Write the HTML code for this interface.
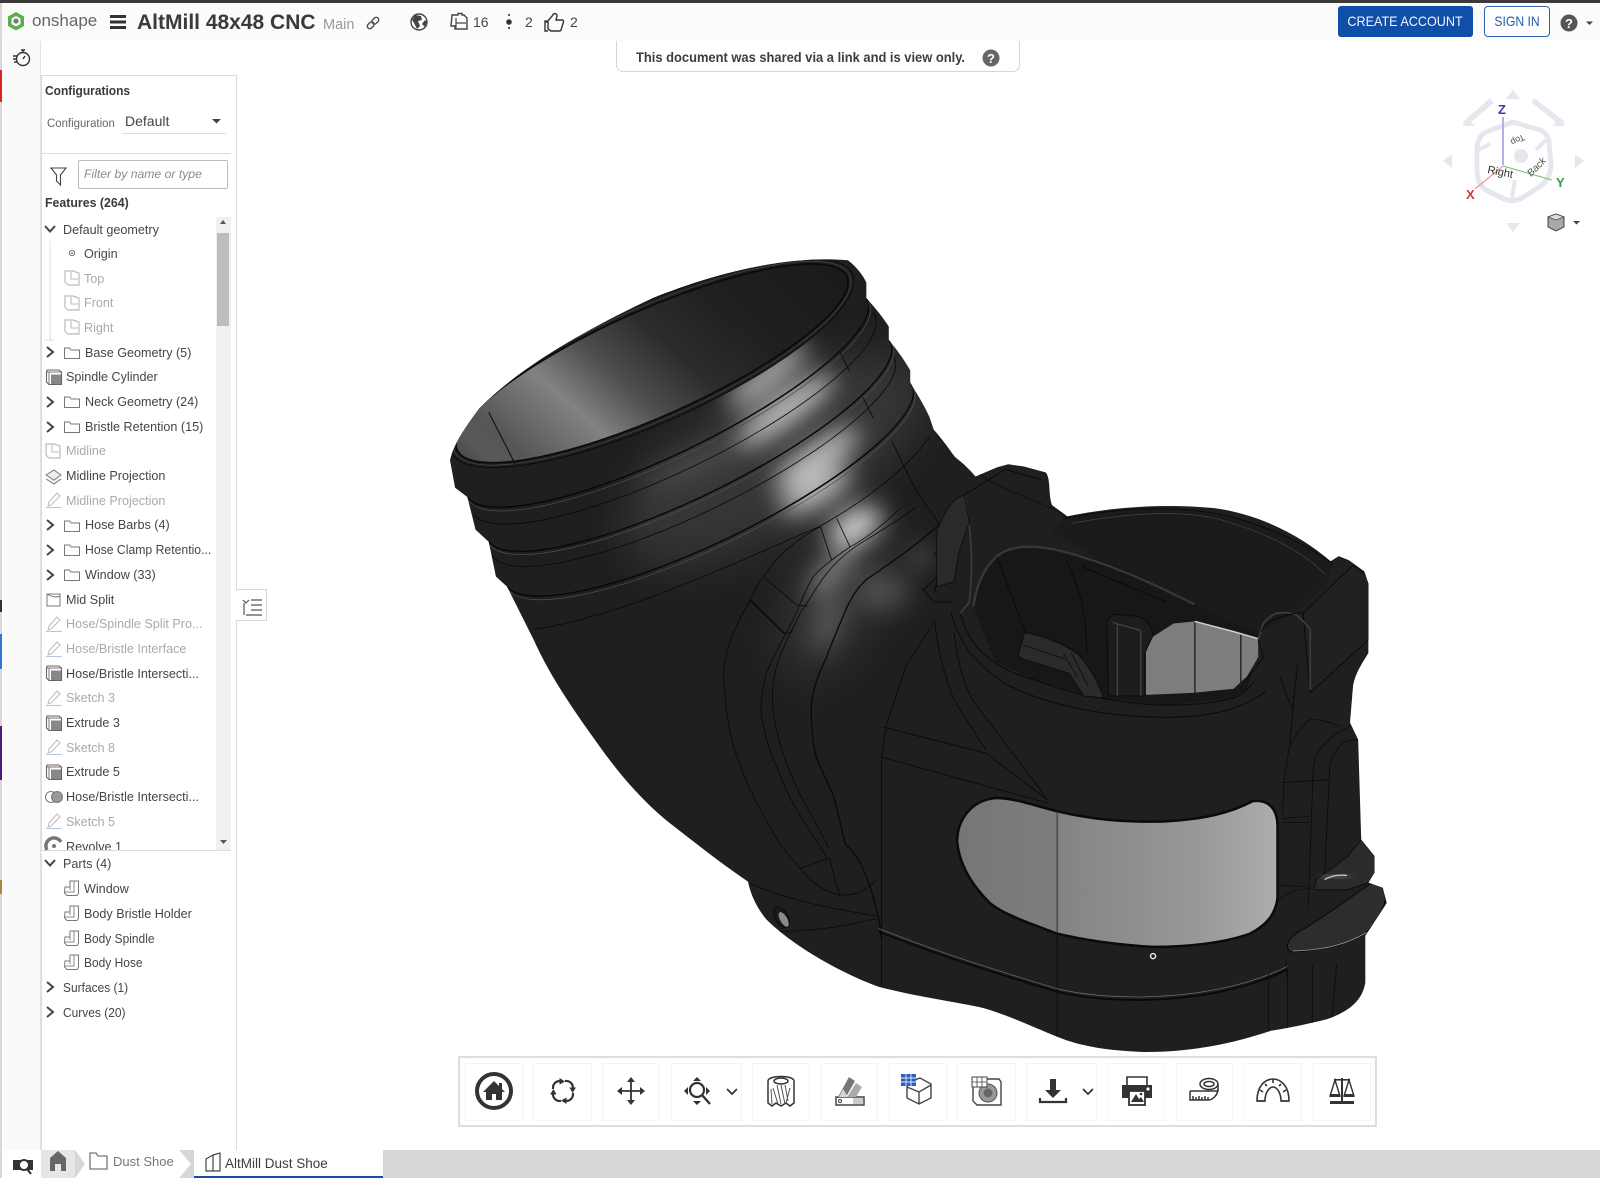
<!DOCTYPE html>
<html lang="en"><head><meta charset="utf-8"><title>AltMill 48x48 CNC | Onshape</title>
<style>
html,body{margin:0;padding:0;background:#fff}
body{position:relative;width:1600px;height:1178px;overflow:hidden;font-family:"Liberation Sans",sans-serif;color:#3f3f3f}
.a{position:absolute;white-space:nowrap}
svg{position:absolute;left:0;top:0;overflow:visible}
#rows{position:absolute;left:41px;top:217px;width:175px;height:633px;overflow:hidden}
.r{position:absolute;white-space:nowrap;font-size:12.6px;line-height:16px;color:#454545}
.d{color:#aaa}
.sq{display:inline-block}
</style></head><body>

<!-- chrome -->
<div class="a" style="left:0;top:0;width:1600px;height:3px;background:#3a3a3a"></div>
<div class="a" style="left:0;top:3px;width:1600px;height:38px;background:#fbfbfb"></div>
<div class="a" style="left:0;top:3px;width:2px;height:1175px;background:#d8d8d8"></div>
<div class="a" style="left:0;top:70px;width:2px;height:32px;background:#d22"></div>
<div class="a" style="left:0;top:634px;width:2px;height:35px;background:#2a78d8"></div>
<div class="a" style="left:0;top:726px;width:2px;height:54px;background:#4b1a80"></div>
<div class="a" style="left:0;top:600px;width:2px;height:12px;background:#333"></div>
<div class="a" style="left:0;top:880px;width:2px;height:14px;background:#a83"></div>
<div class="a" style="left:3px;top:41px;width:38px;height:1109px;background:#fafafa;border-right:1px solid #e2e2e2;box-sizing:border-box"></div>

<!-- 3D model -->
<svg width="1600" height="1178" viewBox="0 0 1568 1154.44" xmlns="http://www.w3.org/2000/svg">
<defs>
<clipPath id="sil"><path d="M831 255C840 262 846 270 849 277L849 292C858 302 866 312 871 320L871 333C880 344 887 354 892 363L892 375C900 388 906 398 911 409L915 421C924 431 930 440 936 448C945 455 951 461 956 467L977 458L988 455L1003 457L1025 463C1030 470 1027 484 1031 495L1046 506C1090 497 1140 493 1190 498C1235 504 1275 525 1304 550L1312 545L1322 549L1337 560L1341 572L1341 640C1335 650 1328 660 1326 672L1323 708L1331 725L1334 823L1347 839L1347 855L1341 865L1355 870L1359 885L1338 917L1338 963C1335 982 1320 992 1300 999C1275 1005 1260 1008 1246 1010C1210 1022 1170 1031 1123 1031C1090 1030 1060 1026 1036 1016C1000 1001 980 992 960 987C925 980 890 975 861 967C820 952 775 925 751 901C742 890 736 878 733 864C705 845 680 825 653 804C630 785 608 760 588 732C565 700 540 665 523 627L497 575L486 565L479 531L466 519L458 487L446 478L441 451C445 435 455 420 470 400C510 360 570 325 640 292C700 268 770 250 831 255Z"/></clipPath>
<filter id="b0" x="-80%" y="-80%" width="260%" height="260%"><feGaussianBlur stdDeviation="22"/></filter>
<filter id="b1" x="-80%" y="-80%" width="260%" height="260%"><feGaussianBlur stdDeviation="12"/></filter>
<filter id="b2" x="-60%" y="-60%" width="220%" height="220%"><feGaussianBlur stdDeviation="5"/></filter>
<linearGradient id="in" gradientUnits="userSpaceOnUse" x1="445" y1="440" x2="835" y2="265">
<stop offset="0" stop-color="#3a3a3a"/><stop offset=".08" stop-color="#585858"/><stop offset=".14" stop-color="#565656"/><stop offset=".3" stop-color="#828282"/><stop offset=".42" stop-color="#4e4e4e"/><stop offset=".55" stop-color="#2c2c2c"/><stop offset=".7" stop-color="#202020"/><stop offset="1" stop-color="#191919"/></linearGradient>
<linearGradient id="win" gradientUnits="userSpaceOnUse" x1="940" y1="0" x2="1255" y2="0">
<stop offset="0" stop-color="#767676"/><stop offset=".3" stop-color="#7d7d7d"/><stop offset=".32" stop-color="#848484"/><stop offset=".75" stop-color="#999"/><stop offset="1" stop-color="#aeaeae"/></linearGradient>
</defs>
<path d="M831 255C840 262 846 270 849 277L849 292C858 302 866 312 871 320L871 333C880 344 887 354 892 363L892 375C900 388 906 398 911 409L915 421C924 431 930 440 936 448C945 455 951 461 956 467L977 458L988 455L1003 457L1025 463C1030 470 1027 484 1031 495L1046 506C1090 497 1140 493 1190 498C1235 504 1275 525 1304 550L1312 545L1322 549L1337 560L1341 572L1341 640C1335 650 1328 660 1326 672L1323 708L1331 725L1334 823L1347 839L1347 855L1341 865L1355 870L1359 885L1338 917L1338 963C1335 982 1320 992 1300 999C1275 1005 1260 1008 1246 1010C1210 1022 1170 1031 1123 1031C1090 1030 1060 1026 1036 1016C1000 1001 980 992 960 987C925 980 890 975 861 967C820 952 775 925 751 901C742 890 736 878 733 864C705 845 680 825 653 804C630 785 608 760 588 732C565 700 540 665 523 627L497 575L486 565L479 531L466 519L458 487L446 478L441 451C445 435 455 420 470 400C510 360 570 325 640 292C700 268 770 250 831 255Z" fill="#1f1f1f"/>
<g clip-path="url(#sil)">
 <!-- soft highlights -->
 <ellipse cx="760" cy="450" rx="170" ry="70" transform="rotate(-30 760 450)" fill="#666" opacity=".32" filter="url(#b0)"/>
 <ellipse cx="820" cy="580" rx="40" ry="90" transform="rotate(25 820 580)" fill="#666" opacity=".3" filter="url(#b0)"/>
 <g filter="url(#b1)" fill="#dcdcdc">
  <ellipse cx="752" cy="368" rx="50" ry="12" transform="rotate(-38 752 368)" opacity=".8"/>
  <ellipse cx="770" cy="402" rx="58" ry="13" transform="rotate(-36 770 402)" opacity=".9"/>
  <ellipse cx="800" cy="450" rx="50" ry="14" transform="rotate(-35 800 450)" opacity=".85"/>
  <ellipse cx="800" cy="482" rx="40" ry="13" transform="rotate(-30 800 482)" opacity=".8"/>
  <ellipse cx="838" cy="516" rx="28" ry="15" transform="rotate(-30 838 516)" opacity="1"/>
  <ellipse cx="815" cy="560" rx="32" ry="9" transform="rotate(-50 815 560)" opacity=".55"/>
  <ellipse cx="812" cy="610" rx="9" ry="28" transform="rotate(20 812 610)" opacity=".3"/>
  <ellipse cx="866" cy="580" rx="26" ry="18" opacity=".22"/>
  <ellipse cx="902" cy="546" rx="11" ry="7" opacity=".4"/>
  <ellipse cx="680" cy="455" rx="60" ry="10" transform="rotate(-25 680 455)" opacity=".15"/>
 </g>
 <!-- mouth -->
 <g transform="rotate(-24 639 356)">
  <ellipse cx="639" cy="356" rx="215" ry="58" fill="#1e1e1e" stroke="#0c0c0c" stroke-width="1"/>
  <ellipse cx="639" cy="356" rx="212" ry="55" fill="none" stroke="#555" stroke-width=".5"/>
 </g>
 <ellipse cx="639" cy="356" rx="209" ry="52" transform="rotate(-24 639 356)" fill="url(#in)" stroke="#0a0a0a" stroke-width="1.6"/>
 <path d="M479 404L505 455" stroke="#0c0c0c" stroke-width="1" fill="none"/>
 <!-- ribs -->
 <g fill="none" stroke="#090909">
  <path d="M458 487A216 54 -26 0 0 849 292" stroke-width="1.5"/>
  <path d="M459 490A216 54 -26 0 0 851 296" stroke="#505050" stroke-width=".7"/>
  <path d="M465 505A216 54 -26 0 0 855 306" stroke-width=".8"/>
  <path d="M479 531A216 54 -26 0 0 871 333" stroke-width="1.5"/>
  <path d="M480 534A216 54 -26 0 0 873 336" stroke="#505050" stroke-width=".7"/>
  <path d="M482 544A216 54 -26 0 0 876 350" stroke-width=".8"/>
  <path d="M497 575A216 54 -26 0 0 892 375" stroke-width="1.5"/>
  <path d="M498 578A216 54 -26 0 0 894 379" stroke="#505050" stroke-width=".7"/>
  <path d="M523 617C600 605 680 570 803 516C840 495 885 465 911 428" stroke-width=".8"/>
  <path d="M823 345L833 365M846 390L856 410" stroke-width=".8"/>
  <path d="M874 432C885 455 895 480 915 505C925 520 925 530 915 545" stroke-width=".8"/>
  <!-- channel lines -->
  <path d="M804 516C785 526 770 538 758 552C748 565 740 576 735 588C725 605 718 620 714 634C709 650 708 662 710 673C711 695 714 715 719 732C728 760 738 782 751 804C762 825 772 838 784 851" stroke-width=".8"/>
  <path d="M882 498C865 515 850 527 833 536C820 545 808 553 797 565C789 578 783 595 777 608C766 628 757 645 751 660C747 675 745 687 746 699C749 720 755 740 764 758C775 790 795 815 810 840" stroke-width=".8"/>
  <path d="M898 497C880 510 865 519 849 529C833 538 820 550 810 562C800 575 792 590 784 601C775 620 766 636 761 653C757 668 756 685 758 699C760 715 765 732 771 748C782 780 800 805 812 831" stroke-width=".8"/>
  <path d="M930 505C905 530 875 550 849 568C840 576 835 585 830 595C824 610 816 627 810 644C802 660 796 677 795 693C795 710 796 727 800 742C806 758 813 770 817 781C822 798 825 813 828 827C835 833 840 840 843 846C850 860 856 878 859 892C862 902 863 912 864 921" stroke-width="1.3"/>
  <path d="M804 516L815 549M820 508L833 536M750 567L781 593M781 593L792 594" stroke-width=".8"/>
  <path d="M735 588L769 621" stroke-width="1.6"/>
  <path d="M769 621L777 619M784 851L813 841L823 879M784 851C795 865 810 875 823 877C840 878 850 872 859 862M735 866C780 885 825 892 861 898M764 913C800 912 830 908 859 900" stroke-width=".8"/>
  <path d="M916 608L888 653L869 709L864 742L864 967" stroke-width=".8"/>
  <path d="M863 712L966 738L1027 784M864 742L1027 787" stroke-width=".8"/>
  <path d="M916 608C918 635 925 660 935 686L966 735M935 620C938 650 945 670 953 686L1027 784" stroke-width=".8"/>
  <path d="M1036 795V1018" stroke-width=".8"/>
  <path d="M861 913C930 940 980 955 1036 972C1090 985 1190 985 1262 950" stroke-width="1.8"/>
  <path d="M861 910C930 937 980 952 1036 969C1090 982 1190 982 1262 947" stroke="#707070" stroke-width=".7"/>
  <path d="M1243 955L1243 1010M1262 950L1262 1008M1286 945L1286 1003M1310 945L1305 998" stroke-width=".7"/>
  <!-- right-side arches -->
  <path d="M1257 797C1258 775 1258 760 1261 748C1262 740 1263 735 1264 731C1270 718 1278 710 1284 705M1282 888C1284 840 1286 790 1287 751C1288 745 1290 740 1293 735C1300 725 1312 716 1323 712M1298 859C1300 820 1302 780 1303 751C1305 742 1310 733 1316 728C1322 725 1328 724 1331 726" stroke-width=".7"/>
  <path d="M1257 767L1303 764M1256 806H1284M1256 802L1284 800M1250 867L1280 869M1284 705C1292 705 1300 706 1313 712" stroke-width=".7"/>
 </g>
 <!-- opening -->
 <path d="M1042 508C1100 497 1160 494 1208 507C1250 518 1285 537 1306 552L1300 572C1270 600 1250 615 1236 619L1209 611L1143 578L1078 549L1030 520Z" fill="#1b1b1b"/>
 <path d="M1042 508C1100 497 1160 494 1208 507C1250 518 1285 537 1306 552" fill="none" stroke="#0b0b0b" stroke-width="1"/>
 <path d="M1050 513C1120 500 1170 500 1205 512C1245 524 1275 540 1298 562" fill="none" stroke="#444" stroke-width=".7"/>
 <path d="M954 594C960 570 968 555 977 546C990 537 1000 536 1013 537C1040 540 1060 543 1078 549C1110 560 1125 568 1143 578C1170 592 1190 602 1209 611L1236 619L1222 675L1209 684L1143 691L1078 684L1013 666L975 648Z" fill="#171717"/>
 <path d="M941 601C945 615 950 625 957 634C975 652 990 660 1013 666C1040 676 1060 681 1078 684C1100 688 1125 691 1143 691C1170 691 1190 689 1209 684C1218 681 1222 675 1230 668" fill="none" stroke="#0a0a0a" stroke-width="1"/>
 <path d="M932 600C940 630 955 650 985 670C1020 688 1070 702 1143 703C1180 703 1215 697 1240 678" fill="none" stroke="#0a0a0a" stroke-width="1"/>
 <path d="M954 594C958 565 970 548 985 540C1000 534 1020 535 1040 540C1090 553 1130 572 1170 592" fill="none" stroke="#383838" stroke-width="2.2"/>
 <!-- grey insert -->
 <path d="M1123 637L1130 624L1150 611L1171 609L1209 619L1233 626L1233 644L1222 663L1209 675L1169 679L1123 681Z" fill="#7d7d7d"/>
 <path d="M1171 609L1209 619L1233 626" fill="none" stroke="#cfcfcf" stroke-width="1.5"/>
 <path d="M1171 610V680M1216 622V672" stroke="#1d1d1d" stroke-width="1.3" fill="none"/>
 <!-- inner stems -->
 <path d="M1085 610C1085 606 1090 602 1095 602L1115 604C1125 607 1128 614 1130 622L1122 640L1122 682L1086 682Z" fill="#1d1d1d" stroke="#0a0a0a" stroke-width="1"/>
 <path d="M1090 610L1118 618M1118 618V682M1095 612V682" fill="none" stroke="#454545" stroke-width="1.2"/>
 <path d="M998 642L1004 620C1020 622 1040 630 1055 640C1068 652 1075 668 1082 684L1062 682L1048 660L1000 645Z" fill="#2b2b2b" stroke="#0c0c0c" stroke-width=".9"/>
 <path d="M1003 632L1044 646M1042 640L1056 664M1050 640L1066 672" fill="none" stroke="#0c0c0c" stroke-width=".8"/>
 <path d="M977 546L1005 620M1045 550C1055 570 1065 595 1065 640M1060 555L1143 590" fill="none" stroke="#070707" stroke-width=".8"/>
 <!-- right clip -->
 <path d="M1277 601L1326 554L1341 565L1341 627L1284 679Z" fill="#212121" stroke="#0b0b0b" stroke-width="1"/>
 <path d="M1233 627L1238 611C1242 606 1246 603 1251 601C1258 600 1265 600 1271 603C1276 608 1281 612 1284 617L1284 676" fill="none" stroke="#3e3e3e" stroke-width="1.6"/>
 <path d="M1233 627L1238 644L1222 666M1254 663L1267 696L1264 728M1272 650C1270 665 1268 680 1267 696" fill="none" stroke="#0a0a0a" stroke-width=".9"/>
 <path d="M1236 619C1240 610 1248 607 1258 604C1265 602 1272 600 1277 601" fill="none" stroke="#0a0a0a" stroke-width="1"/>
 <!-- left clip -->
 <path d="M916 580C920 560 925 540 925 520C928 500 935 490 945 485L985 460L1020 470M924 560L905 578L915 590L934 590" fill="none" stroke="#0a0a0a" stroke-width="1"/>
 <path d="M945 485C950 510 955 545 950 590L941 601" fill="none" stroke="#3c3c3c" stroke-width="1.6"/>
 <path d="M918 520C925 505 930 490 945 485L950 512L940 540L935 570L918 575Z" fill="#2a2a2a" stroke="#0a0a0a" stroke-width=".8"/>
 <path d="M960 465C980 480 1030 495 1045 506" fill="none" stroke="#0c0c0c" stroke-width=".8"/>
 <path d="M1290 862L1320 840L1334 823L1347 839L1347 855L1341 865L1320 872L1288 872Z" fill="#2b2b2b" stroke="#0a0a0a" stroke-width=".8"/>
 <path d="M1296 860L1322 858" stroke="#a8a8a8" stroke-width="2.5" fill="none" filter="url(#b2)"/>
 <path d="M1298 862C1305 858 1312 857 1320 858" stroke="#c8c8c8" stroke-width="1.2" fill="none"/>
 <!-- pad -->
 <path d="M1263 932C1259 925 1264 917 1280 909C1295 900 1320 882 1343 866C1350 864 1355 868 1357 875C1360 885 1352 900 1339 914C1320 925 1300 931 1267 933Z" fill="#2d2d2d" stroke="#090909" stroke-width="1"/>
 <path d="M1267 932C1300 931 1320 925 1339 914" fill="none" stroke="#999" stroke-width=".8"/>
 <path d="M1251 885C1258 875 1270 872 1285 870M1260 940L1262 965" fill="none" stroke="#0d0d0d" stroke-width=".7"/>
 <!-- hole -->
 <ellipse cx="766" cy="899" rx="6" ry="11" transform="rotate(-30 766 899)" fill="#1a1a1a" stroke="#0a0a0a" stroke-width="1"/>
 <ellipse cx="768" cy="901" rx="3.5" ry="8" transform="rotate(-30 768 901)" fill="#8a8a8a"/>
</g>
<!-- window -->
<path d="M938 825C938 805 950 785 975 782C995 782 1015 790 1036 795C1070 803 1100 806 1140 805C1180 803 1205 797 1228 785C1245 783 1252 795 1252 810L1252 880C1250 897 1240 907 1225 915C1200 924 1165 928 1130 928C1095 926 1065 922 1036 915C1010 905 985 897 970 885C950 865 940 845 938 825Z" fill="url(#win)" stroke="#0b0b0b" stroke-width="2.5"/>
<path d="M1036 795V915" stroke="#2a2a2a" stroke-width=".9" fill="none"/>
<circle cx="1130" cy="937" r="2.5" fill="#222" stroke="#eee" stroke-width="1.4"/>
</svg>

<!-- sidebar panel -->
<div class="a" style="left:41px;top:75px;width:196px;height:1075px;box-sizing:border-box;border:1px solid #dcdcdc;border-bottom:none;background:#fff"></div>
<div class="a" style="left:41px;top:153px;width:190px;height:1px;background:#dcdcdc"></div>
<div class="a" style="left:41px;top:850px;width:190px;height:1px;background:#dcdcdc"></div>
<div class="a" style="left:122px;top:133px;width:104px;height:1px;background:#ddd"></div>
<div class="a" style="left:78px;top:160px;width:148px;height:27px;border:1px solid #bbb;border-radius:2px;background:#fff"></div>
<div class="a" style="left:84px;top:167px;font-size:12.2px;line-height:15px;font-style:italic;color:#8a8a8a">Filter by name or type</div>
<div class="a" style="left:216px;top:217px;width:15px;height:633px;background:#f0f0f0"></div>
<div class="a" style="left:217px;top:233px;width:12px;height:93px;background:#bdbdbd"></div>
<div class="a" style="left:45px;top:82.5px;font-size:13px;font-weight:bold;line-height:16px;color:#3a3a3a;transform:scaleX(.92);transform-origin:0 0">Configurations</div>
<div class="a" style="left:47px;top:116px;font-size:12.4px;line-height:15px;color:#666;transform:scaleX(.92);transform-origin:0 0">Configuration</div>
<div class="a" style="left:125px;top:113px;font-size:14px;line-height:17px;color:#444">Default</div>
<div class="a" style="left:45px;top:195px;font-size:13px;font-weight:bold;line-height:16px;color:#3a3a3a;transform:scaleX(.95);transform-origin:0 0">Features (264)</div>

<div id="rows">
<div class="r" style="left:22px;top:5px">Default geometry</div>
<div class="r" style="left:43px;top:29px">Origin</div>
<div class="r d" style="left:43px;top:54px">Top</div>
<div class="r d" style="left:43px;top:78px">Front</div>
<div class="r d" style="left:43px;top:103px">Right</div>
<div class="r" style="left:44px;top:128px">Base Geometry (5)</div>
<div class="r" style="left:25px;top:152px">Spindle Cylinder</div>
<div class="r" style="left:44px;top:177px">Neck Geometry (24)</div>
<div class="r" style="left:44px;top:202px">Bristle Retention (15)</div>
<div class="r d" style="left:25px;top:226px">Midline</div>
<div class="r" style="left:25px;top:251px">Midline Projection</div>
<div class="r d" style="left:25px;top:276px">Midline Projection</div>
<div class="r" style="left:44px;top:300px">Hose Barbs (4)</div>
<div class="r" style="left:44px;top:325px;transform:scaleX(.97);transform-origin:0 0">Hose Clamp Retentio...</div>
<div class="r" style="left:44px;top:350px">Window (33)</div>
<div class="r" style="left:25px;top:375px">Mid Split</div>
<div class="r d" style="left:25px;top:399px">Hose/Spindle Split Pro...</div>
<div class="r d" style="left:25px;top:424px">Hose/Bristle Interface</div>
<div class="r" style="left:25px;top:449px">Hose/Bristle Intersecti...</div>
<div class="r d" style="left:25px;top:473px">Sketch 3</div>
<div class="r" style="left:25px;top:498px">Extrude 3</div>
<div class="r d" style="left:25px;top:523px">Sketch 8</div>
<div class="r" style="left:25px;top:547px">Extrude 5</div>
<div class="r" style="left:25px;top:572px">Hose/Bristle Intersecti...</div>
<div class="r d" style="left:25px;top:597px">Sketch 5</div>
<div class="r" style="left:25px;top:622px">Revolve 1</div>
</div>
<div class="r" style="left:63px;top:855.7px">Parts (4)</div>
<div class="r" style="left:84px;top:880.5px">Window</div>
<div class="r" style="left:84px;top:905.5px">Body Bristle Holder</div>
<div class="r" style="left:84px;top:930.5px;transform:scaleX(.95);transform-origin:0 0">Body Spindle</div>
<div class="r" style="left:84px;top:955px;transform:scaleX(.95);transform-origin:0 0">Body Hose</div>
<div class="r" style="left:63px;top:980px;transform:scaleX(.95);transform-origin:0 0">Surfaces (1)</div>
<div class="r" style="left:63px;top:1004.7px;transform:scaleX(.95);transform-origin:0 0">Curves (20)</div>

<!-- list toggle -->
<div class="a" style="left:236px;top:589px;width:31px;height:32px;box-sizing:border-box;border:1px solid #d8d8d8;border-left:none;background:#fff"></div>

<!-- top bar text -->
<div class="a" style="left:32px;top:11px;font-size:17px;line-height:20px;color:#666">onshape</div>
<div class="a" style="left:137px;top:10px;font-size:21px;font-weight:bold;line-height:25px;color:#3a3a3a">AltMill 48x48 CNC</div>
<div class="a" style="left:323px;top:16px;font-size:14.5px;line-height:18px;color:#999">Main</div>
<div class="a" style="left:473px;top:14px;font-size:14px;line-height:17px;color:#444">16</div>
<div class="a" style="left:525px;top:14px;font-size:14px;line-height:17px;color:#444">2</div>
<div class="a" style="left:570px;top:14px;font-size:14px;line-height:17px;color:#444">2</div>

<!-- banner -->
<div class="a" style="left:616px;top:41px;width:404px;height:31px;box-sizing:border-box;border:1px solid #d5d5d5;border-top:none;border-radius:0 0 7px 7px;background:#fff"></div>
<div class="a" style="left:636px;top:49px;font-size:14px;font-weight:bold;line-height:17px;color:#3d3d3d;transform:scaleX(.922);transform-origin:0 0">This document was shared via a link and is view only.</div>

<!-- buttons -->
<div class="a" style="left:1338px;top:6px;width:135px;height:31px;background:#0f4fa8;border-radius:3px;color:#f1f5fb;font-size:14px;line-height:31px;text-align:center"><span class="sq" style="transform:scaleX(.9)">CREATE ACCOUNT</span></div>
<div class="a" style="left:1484px;top:6px;width:66px;height:31px;box-sizing:border-box;background:#fff;border:1px solid #2e64ac;border-radius:4px;color:#255ca6;font-size:14px;line-height:29px;text-align:center"><span class="sq" style="transform:scaleX(.87)">SIGN IN</span></div>

<!-- bottom -->
<div class="a" style="left:41px;top:1150px;width:1559px;height:28px;background:#d7d7d7"></div>
<div class="a" style="left:41px;top:1150px;width:34px;height:28px;background:#e6e6e6"></div>
<div class="a" style="left:75px;top:1150px;width:116px;height:28px;background:#fff;clip-path:polygon(0 0,104px 0,116px 14px,104px 28px,0 28px,10px 14px)"></div>
<div class="a" style="left:194px;top:1150px;width:189px;height:26px;background:#fff;border-bottom:2px solid #1b4f9e"></div>
<div class="a" style="left:113px;top:1153px;font-size:13px;line-height:17px;color:#777">Dust Shoe</div>
<div class="a" style="left:225px;top:1155px;font-size:13.5px;line-height:17px;color:#3d3d3d">AltMill Dust Shoe</div>

<!-- toolbar -->
<div class="a" style="left:458px;top:1056px;width:919px;height:71px;box-sizing:border-box;border:2px solid #dedede;background:#fff"></div>
<div class="a" style="left:465px;top:1063px;width:58px;height:58px;box-sizing:border-box;border:1px solid #f5f5f5"></div>
<div class="a" style="left:533px;top:1063px;width:59px;height:58px;box-sizing:border-box;border:1px solid #f5f5f5"></div>
<div class="a" style="left:602px;top:1063px;width:57px;height:58px;box-sizing:border-box;border:1px solid #f5f5f5"></div>
<div class="a" style="left:671px;top:1063px;width:71px;height:58px;box-sizing:border-box;border:1px solid #f5f5f5"></div>
<div class="a" style="left:752px;top:1063px;width:58px;height:58px;box-sizing:border-box;border:1px solid #f5f5f5"></div>
<div class="a" style="left:821px;top:1063px;width:57px;height:58px;box-sizing:border-box;border:1px solid #f5f5f5"></div>
<div class="a" style="left:889px;top:1063px;width:58px;height:58px;box-sizing:border-box;border:1px solid #f5f5f5"></div>
<div class="a" style="left:957px;top:1063px;width:59px;height:58px;box-sizing:border-box;border:1px solid #f5f5f5"></div>
<div class="a" style="left:1026px;top:1063px;width:71px;height:58px;box-sizing:border-box;border:1px solid #f5f5f5"></div>
<div class="a" style="left:1107px;top:1063px;width:58px;height:58px;box-sizing:border-box;border:1px solid #f5f5f5"></div>
<div class="a" style="left:1176px;top:1063px;width:57px;height:58px;box-sizing:border-box;border:1px solid #f5f5f5"></div>
<div class="a" style="left:1244px;top:1063px;width:58px;height:58px;box-sizing:border-box;border:1px solid #f5f5f5"></div>
<div class="a" style="left:1313px;top:1063px;width:58px;height:58px;box-sizing:border-box;border:1px solid #f5f5f5"></div>

<!-- icons -->
<svg width="1600" height="1178" viewBox="0 0 1600 1178" xmlns="http://www.w3.org/2000/svg">
<defs>
<g id="cr"><path d="M-3 -5L3 0L-3 5" fill="none" stroke="#444" stroke-width="2"/></g>
<g id="cd"><path d="M-5 -3L0 2.5L5 -3" fill="none" stroke="#444" stroke-width="2"/></g>
<g id="fo"><path d="M-7.5 -5H-2.5L-1 -3H7.5V5.5H-7.5Z" fill="#fff" stroke="#777" stroke-width="1"/></g>
<g id="ex"><path d="M-7 -7H5L7.5 -5V7.5H-5L-7.5 5V-5Z" fill="#fff" stroke="#666" stroke-width="1.1"/><path d="M-7 -5H7M-5 -5V7" stroke="#777" stroke-width="1" fill="none"/><rect x="-3" y="-2.5" width="10" height="9.5" fill="#888"/></g>
<g id="pl"><path d="M-7 -7L1 -7L7 -5V7L-4 7L-7 4Z" fill="#fff" stroke="#bbb" stroke-width="1.2"/><path d="M-1 -6V1H6" fill="none" stroke="#bbb" stroke-width="1.1"/></g>
<g id="sk"><path d="M-6 6L-5 2L3 -7L6 -4L-3 5Z" fill="#fff" stroke="#bbb" stroke-width="1"/><path d="M-8 7.5H8" stroke="#b6c6dc" stroke-width="1"/></g>
<g id="pa"><path d="M-7 -1H-2V-7H6.5V5.5L5 7.5H-5L-7.5 5Z" fill="#fff" stroke="#777" stroke-width="1"/><path d="M-7 4H2V-7M-2 -1V2" fill="none" stroke="#888" stroke-width="1"/></g>
<g id="ol"><path d="M-10 -2C-10.5 -7 -7 -10 -3 -10" fill="none" stroke="#333" stroke-width="2.2"/><path d="M-3.5 -13L2 -9.5L-3.5 -6.5Z" fill="#333"/></g>
</defs>

<!-- sidebar tree icons -->
<use href="#cd" x="50" y="229"/><use href="#cr" x="50" y="352"/><use href="#cr" x="50" y="402"/><use href="#cr" x="50" y="427"/><use href="#cr" x="50" y="525"/><use href="#cr" x="50" y="550"/><use href="#cr" x="50" y="575"/><use href="#cd" x="50" y="863"/><use href="#cr" x="50" y="987"/><use href="#cr" x="50" y="1012"/>
<path d="M50 241V340M45 340H54" stroke="#ddd" stroke-width="1" fill="none"/>
<circle cx="72" cy="253" r="2.6" fill="none" stroke="#777"/><circle cx="72" cy="253" r="1" fill="#777"/>
<use href="#pl" x="72" y="278"/><use href="#pl" x="72" y="303"/><use href="#pl" x="72" y="327"/><use href="#pl" x="53" y="451"/>
<use href="#fo" x="72" y="353"/><use href="#fo" x="72" y="402"/><use href="#fo" x="72" y="427"/><use href="#fo" x="72" y="526"/><use href="#fo" x="72" y="550"/><use href="#fo" x="72" y="575"/>
<use href="#ex" x="54" y="377"/><use href="#ex" x="54" y="673"/><use href="#ex" x="54" y="723"/><use href="#ex" x="54" y="772"/>
<use href="#sk" x="54" y="500"/><use href="#sk" x="54" y="624"/><use href="#sk" x="54" y="649"/><use href="#sk" x="54" y="698"/><use href="#sk" x="54" y="747"/><use href="#sk" x="54" y="821"/>
<path d="M46 475L54 470L61 475L54 480ZM46 479L54 484L61 479" fill="#eee" stroke="#777" stroke-width="1"/>
<path d="M47 594H60V606H47Z M47 594C52 597 56 598 60 596" fill="#fff" stroke="#777" stroke-width="1"/>
<circle cx="51" cy="797" r="5.5" fill="#fff" stroke="#777"/><circle cx="57" cy="797" r="5.5" fill="#999" stroke="#777"/>
<path d="M47 850A8 8 0 1 1 61 842" fill="none" stroke="#777" stroke-width="3.5"/><circle cx="54" cy="846" r="2" fill="#777"/>
<rect x="41" y="851" width="180" height="3" fill="#fff"/>
<use href="#pa" x="72" y="888"/><use href="#pa" x="72" y="913"/><use href="#pa" x="72" y="938"/><use href="#pa" x="72" y="962"/>
<path d="M220 224L223 220L226 224Z M220 840H227L223.5 844Z" fill="#555"/>
<path d="M51 168H66L60.5 175V185L56.5 181V175Z" fill="#fff" stroke="#444" stroke-width="1.1"/>
<path d="M212 119H221L216.5 123.5Z" fill="#444"/>
<path d="M243 600L246 603L249 600M244 603V615M251 600H262M251 605H262M251 610H262M246 615H262" fill="none" stroke="#555" stroke-width="1.2"/>

<!-- top bar icons -->
<path d="M16 12L24 16.5V26L16 30.5L8 26V16.5Z" fill="#5fae4e"/><path d="M16 16L20.5 18.5V24L16 26.5L11.5 24V18.5Z" fill="#fbfbfb"/><circle cx="16" cy="21" r="2.6" fill="#7a7a7a"/>
<rect x="110" y="15" width="16" height="3" fill="#333"/><rect x="110" y="20.5" width="16" height="3" fill="#333"/><rect x="110" y="26" width="16" height="3" fill="#333"/>
<g transform="translate(373 23) rotate(-45)" fill="none" stroke="#555" stroke-width="1.5"><rect x="-7" y="-2.5" width="7.5" height="5" rx="2.5"/><rect x="-.5" y="-2.5" width="7.5" height="5" rx="2.5"/></g>
<circle cx="419" cy="22" r="8" fill="#fff" stroke="#444" stroke-width="1.4"/><path d="M415 15L421 16L422 20L418 21L420 26L417 29L414 23L412 20ZM425 20L427 22L425 27L422 24Z" fill="#444"/>
<path d="M451 16H457V14.5H461V16H463L466 19V30H454V27H450Z" fill="none" stroke="#444" stroke-width="1.4" transform="translate(1 -1)"/><path d="M455 19V29M455 24H465" stroke="#444" stroke-width="1.2" transform="translate(1 -1)" fill="none"/>
<circle cx="509" cy="22" r="2.8" fill="#333"/><path d="M509 14V17M509 27V31" stroke="#333" stroke-width="1.6" stroke-dasharray="2 2" fill="none"/>
<path d="M547 22L553 15C553 13 557 13 557 16L556 20H562C563 20 564 21 563.5 22L561 30C561 31 560 31 559 31H551L548 29V22ZM547 21H545V31H548" fill="none" stroke="#333" stroke-width="1.4"/>
<circle cx="991" cy="58" r="8.5" fill="#666"/><text x="991" y="63" font-family="Liberation Sans" font-size="13" font-weight="bold" fill="#fff" text-anchor="middle">?</text>
<circle cx="1569" cy="23" r="8.5" fill="#555"/><text x="1569" y="28" font-family="Liberation Sans" font-size="13" font-weight="bold" fill="#fff" text-anchor="middle">?</text>
<path d="M1586 21.5H1593L1589.5 25Z" fill="#444"/>

<!-- stopwatch -->
<g fill="none" stroke="#333" stroke-width="1.4"><circle cx="23" cy="59" r="6.5"/><path d="M21 50H25M23 50V52M23 59L25 56M13 56H17M13 59H16M14 62H17"/></g>

<!-- bottom bar icons -->
<path d="M50 1158L58 1151L66 1158V1171H61V1164H55V1171H50Z" fill="#666"/>
<path d="M90 1153H96L98 1156H107V1169H90Z" fill="#fff" stroke="#777" stroke-width="1.3"/>
<path d="M206 1159L213 1155V1171H206ZM213 1155L220 1153V1171H213Z" fill="#fff" stroke="#444" stroke-width="1.2"/>
<path d="M13 1160H33V1170H13Z" fill="#333"/><circle cx="24" cy="1165" r="5" fill="#fff" stroke="#333" stroke-width="2"/><path d="M27 1169L31 1174" stroke="#333" stroke-width="2.2"/>

<!-- gizmo -->
<g fill="#e4e8ee">
<path d="M1513 90L1520 99H1506ZM1513 232L1520 223H1506ZM1443 161L1452 154V168ZM1584 161L1575 154V168Z"/>
<path d="M1464 121L1490 98L1494 103L1471 122L1475 126H1463Z M1564 121L1534 98L1532 103L1556 122L1552 126H1564Z"/>
</g>
<path d="M1513 122L1540 130Q1548 134 1549 142L1551 165Q1550 178 1542 185L1522 198Q1512 203 1502 198L1486 190Q1478 184 1477 172L1477 148Q1478 136 1486 132Z" fill="#fff" stroke="#e4e8ee" stroke-width="5"/>
<circle cx="1521" cy="156" r="7" fill="#e4e8ee"/><path d="M1478 150L1490 144M1546 140L1536 150M1512 198L1515 180" stroke="#e4e8ee" stroke-width="4" fill="none"/>
<path d="M1503 117V165" stroke="#b5b0e6" stroke-width="2" fill="none"/>
<path d="M1503 166L1552 180" stroke="#6fbf6f" stroke-width="1" fill="none"/>
<path d="M1503 166L1475 189" stroke="#e89a9a" stroke-width="1.2" fill="none"/>
<text x="1498" y="114" font-family="Liberation Sans" font-size="13" font-weight="bold" fill="#3a3ac0">Z</text>
<text x="1556" y="187" font-family="Liberation Sans" font-size="13" font-weight="bold" fill="#2f9f3f">Y</text>
<text x="1466" y="199" font-family="Liberation Sans" font-size="13" font-weight="bold" fill="#d23a3a">X</text>
<text x="1487" y="173" font-family="Liberation Sans" font-size="11" fill="#333" transform="rotate(11 1487 173)">Right</text>
<text x="1531" y="177" font-family="Liberation Sans" font-size="10" font-style="italic" fill="#555" transform="rotate(-45 1531 177)">Back</text>
<text x="1523" y="134" font-family="Liberation Sans" font-size="9" fill="#555" transform="rotate(155 1523 134)">Top</text>
<path d="M1548 217L1556 214L1564 217V227L1556 231L1548 227Z" fill="#a8a8a8" stroke="#444" stroke-width="1"/><path d="M1548 217L1556 220L1564 217L1556 214Z" fill="#ddd" stroke="#444" stroke-width=".7"/>
<path d="M1573 221H1580L1576.5 224.5Z" fill="#444"/>

<!-- toolbar icons -->
<g transform="translate(494 1091)">
<circle r="17" fill="#fff" stroke="#333" stroke-width="4"/><path d="M-11 1L0 -10L5 -5V-8H8V-2L11 1H8V9H2V3H-2V9H-8V1Z" fill="#333"/></g>
<g transform="translate(563 1091)">
<use href="#ol"/><use href="#ol" transform="rotate(90)"/><use href="#ol" transform="rotate(180)"/><use href="#ol" transform="rotate(270)"/></g>
<g transform="translate(631 1091)" fill="#333"><path d="M0 -11V11M-11 0H11" stroke="#333" stroke-width="1.8"/><path d="M0 -14L4 -9H-4ZM0 14L4 9H-4ZM-14 0L-9 4V-4ZM14 0L9 4V-4Z"/></g>
<g transform="translate(697 1091)"><circle r="7" cx="0" cy="-1" fill="none" stroke="#333" stroke-width="2.2"/><path d="M5 4L13 13" stroke="#333" stroke-width="2.4"/><path d="M0 -14L4 -10H-4ZM0 14L4 10H-4ZM-13 0L-9 4V-4ZM13 0L9 4V-4Z" fill="#333"/></g>
<path d="M727 1089L732 1094L737 1089M1083 1089L1088 1094L1093 1089" fill="none" stroke="#333" stroke-width="1.7"/>
<g transform="translate(781 1091)" fill="none" stroke="#333" stroke-width="1.5"><path d="M-13 -10C-13 -16 13 -16 13 -10V12L9 15L5 12L0 15L-5 12L-9 15L-13 12Z"/><ellipse cy="-10" rx="7" ry="3"/><path d="M-8 -3L-3 13M-4 -6L0 13M0 -6L4 13M4 -6L7 10M9 -3L5 12M-10 -2L-9 13" stroke-width="1" stroke="#555"/></g>
<g transform="translate(850 1091)"><path d="M-14 6H14V14H-14Z" fill="#fff" stroke="#444" stroke-width="1.5"/><rect x="3" y="7" width="10" height="6" fill="#ccc"/><circle cx="-10" cy="10" r="1.5" fill="none" stroke="#444"/><path d="M-12 6L-1 -14L5 -10L-4 6Z" fill="#777"/><path d="M-3 6L6 -8L12 -4L6 6Z" fill="#aaa"/><path d="M-11 6L-7 -2L-2 6Z" fill="#d5d5d5"/></g>
<g transform="translate(917 1091)"><path d="M-10 -8L3 -13L14 -7V7L2 13L-10 7Z" fill="#fff" stroke="#444" stroke-width="1.4"/><path d="M-10 -4L2 1L14 -6M2 1V13" stroke="#444" stroke-width="1.4" fill="none"/><rect x="-16" y="-17" width="15" height="12" fill="#2d5fc4"/><path d="M-11 -17V-5M-6 -17V-5M-16 -13H-1M-16 -9H-1" stroke="#dfe7f7" stroke-width=".9"/></g>
<g transform="translate(987 1091)"><path d="M-14 -12H12L14 -9V14H-10L-14 10Z" fill="#fff" stroke="#444" stroke-width="1.4"/><circle cx="1" cy="2" r="9" fill="#999" stroke="#555"/><circle cx="1" cy="2" r="4.5" fill="#666"/><rect x="-15" y="-14" width="15" height="10" fill="#fff" stroke="#444"/><path d="M-10 -14V-4M-5 -14V-4M-15 -9H0" stroke="#444" stroke-width=".8"/></g>
<g transform="translate(1053 1091)" fill="#333"><path d="M-3 -12H3V-1H8L0 7L-8 -1H-3Z"/><path d="M-13 7V11H13V7" fill="none" stroke="#333" stroke-width="2.2"/></g>
<g transform="translate(1137 1091)"><path d="M-10 -6V-14H10V-6" fill="none" stroke="#333" stroke-width="1.6"/><rect x="-15" y="-6" width="30" height="13" fill="#333"/><rect x="-8" y="0" width="16" height="14" fill="#fff" stroke="#333" stroke-width="1.8"/><path d="M-6 11L-1 3L2 8L4 6L7 11Z" fill="#333"/><circle cx="4" cy="3" r="1.3" fill="#333"/><circle cx="11" cy="-2" r="1.6" fill="#fff"/></g>
<g transform="translate(1204 1091)" fill="none" stroke="#333" stroke-width="1.5"><ellipse cx="5" cy="-7" rx="9" ry="5.5"/><ellipse cx="5" cy="-7" rx="5" ry="2.5"/><path d="M-14 0H14V-7M14 -3C14 5 8 9 4 9H-14V0M-11 9V5M-8 9V6M-5 9V5M-2 9V6M1 9V5M4 9V6"/></g>
<g transform="translate(1273 1091)" fill="none" stroke="#333" stroke-width="1.6"><path d="M-16 10C-16 -5 -8 -12 0 -12C8 -12 16 -5 16 10H8C8 2 4 -4 0 -4C-4 -4 -8 2 -8 10Z"/><path d="M-16 10H-8M8 10H16M-13 -1L-10 1M-8 -7L-6 -5M0 -12V-8M8 -7L6 -5M13 -1L10 1"/></g>
<g transform="translate(1342 1091)" fill="#333"><rect x="-12" y="10" width="24" height="3"/><rect x="-1" y="-13" width="2" height="24"/><rect x="-8" y="-12" width="16" height="1.6"/><path d="M-7 -11L-12 5H-2ZM7 -11L2 5H12Z" fill="#fff" stroke="#333" stroke-width="1.4"/><rect x="-12" y="3" width="10" height="3"/><rect x="2" y="3" width="10" height="3"/></g>
</svg>
</body></html>
